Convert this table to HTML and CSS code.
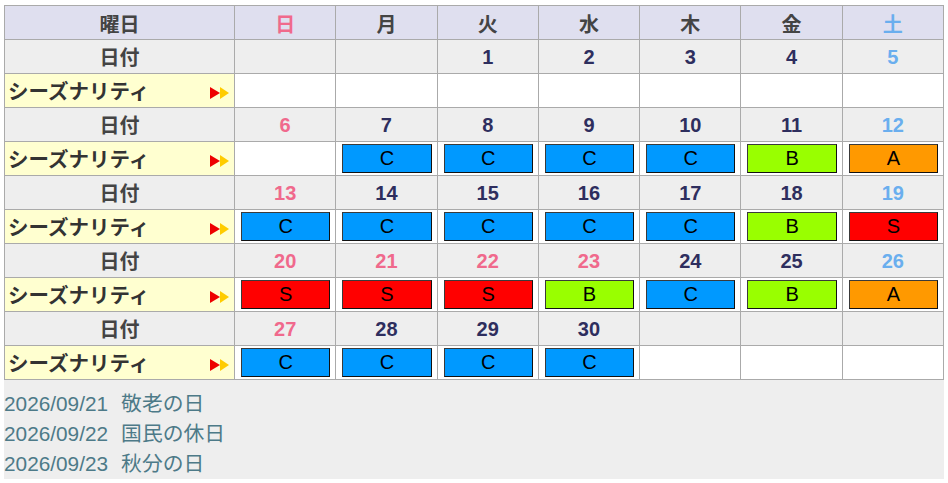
FILE: index.html
```html
<!DOCTYPE html>
<html lang="ja">
<head>
<meta charset="utf-8">
<link rel="stylesheet" href="styles.css">
</head>
<body>
<div class="wrap">
<table class="cal">
<colgroup><col class="c-label"><col><col><col><col><col><col><col></colgroup>
<tr class="head">
<th>曜日</th><th class="sun">日</th><th>月</th><th>火</th><th>水</th><th>木</th><th>金</th><th class="sat">土</th>
</tr>
<tr class="date">
<th>日付</th><td></td><td></td><td>1</td><td>2</td><td>3</td><td>4</td><td class="sat">5</td>
</tr>
<tr class="season">
<th><span class="lbl">シーズナリティ</span><span class="arr"><i class="r"></i><i class="y"></i></span></th><td></td><td></td><td></td><td></td><td></td><td></td><td></td>
</tr>
<tr class="date">
<th>日付</th><td class="sun">6</td><td>7</td><td>8</td><td>9</td><td>10</td><td>11</td><td class="sat">12</td>
</tr>
<tr class="season">
<th><span class="lbl">シーズナリティ</span><span class="arr"><i class="r"></i><i class="y"></i></span></th><td></td><td><div class="b c">C</div></td><td><div class="b c">C</div></td><td><div class="b c">C</div></td><td><div class="b c">C</div></td><td><div class="b bb">B</div></td><td><div class="b a">A</div></td>
</tr>
<tr class="date">
<th>日付</th><td class="sun">13</td><td>14</td><td>15</td><td>16</td><td>17</td><td>18</td><td class="sat">19</td>
</tr>
<tr class="season">
<th><span class="lbl">シーズナリティ</span><span class="arr"><i class="r"></i><i class="y"></i></span></th><td><div class="b c">C</div></td><td><div class="b c">C</div></td><td><div class="b c">C</div></td><td><div class="b c">C</div></td><td><div class="b c">C</div></td><td><div class="b bb">B</div></td><td><div class="b s">S</div></td>
</tr>
<tr class="date">
<th>日付</th><td class="sun">20</td><td class="sun">21</td><td class="sun">22</td><td class="sun">23</td><td>24</td><td>25</td><td class="sat">26</td>
</tr>
<tr class="season">
<th><span class="lbl">シーズナリティ</span><span class="arr"><i class="r"></i><i class="y"></i></span></th><td><div class="b s">S</div></td><td><div class="b s">S</div></td><td><div class="b s">S</div></td><td><div class="b bb">B</div></td><td><div class="b c">C</div></td><td><div class="b bb">B</div></td><td><div class="b a">A</div></td>
</tr>
<tr class="date">
<th>日付</th><td class="sun">27</td><td>28</td><td>29</td><td>30</td><td></td><td></td><td></td>
</tr>
<tr class="season">
<th><span class="lbl">シーズナリティ</span><span class="arr"><i class="r"></i><i class="y"></i></span></th><td><div class="b c">C</div></td><td><div class="b c">C</div></td><td><div class="b c">C</div></td><td><div class="b c">C</div></td><td></td><td></td><td></td>
</tr>
</table>
<ul class="holidays">
<li><span class="d">2026/09/21</span><span class="n">敬老の日</span></li>
<li><span class="d">2026/09/22</span><span class="n">国民の休日</span></li>
<li><span class="d">2026/09/23</span><span class="n">秋分の日</span></li>
</ul>
</div>
</body>
</html>
```
FILE: styles.css
```css
html, body {
  margin: 0;
  padding: 0;
  background: #ffffff;
}
body {
  font-family: "Liberation Sans", Arial, "Noto Sans CJK JP", sans-serif;
  font-size: 20px;
}
.wrap {
  margin: 5px 0 0 4px;
  width: 940px;
  height: 474px;
  background: #eeeeee;
  overflow: hidden;
}
.cal {
  width: 940px;
  border-collapse: collapse;
  table-layout: fixed;
}
.c-label { width: 230px; }
.cal tr { height: 34px; }
.cal th, .cal td {
  border: 1px solid #aaaaaa;
  padding: 0;
  text-align: center;
  vertical-align: middle;
  line-height: 20px;
}
.head th {
  background: #dfdfef;
  color: #444444;
  font-weight: bold;
  padding-top: 5px;
}
.date th {
  background: #eeeeee;
  color: #444444;
  font-weight: bold;
  padding-top: 3px;
}
.date td {
  background: #eeeeee;
  color: #2e2e5e;
  font-weight: bold;
  padding-top: 1px;
}
.head .sun, .date .sun { color: #f0698c; }
.head .sat, .date .sat { color: #6aaeee; }
.season th {
  background: #ffffd0;
  color: #333333;
  text-align: left;
  padding: 4px 5px 0 3px;
}
.season th .lbl {
  font-weight: bold;
  float: left;
  font-size: 20.5px;
}
.season th .arr {
  float: right;
  display: flex;
  align-items: center;
  height: 20px;
  margin-top: 1px;
}
.arr i {
  display: block;
  width: 0;
  height: 0;
  border-top: 6px solid transparent;
  border-bottom: 6px solid transparent;
}
.arr .r { border-left: 10px solid #ee0000; }
.arr .y { border-left: 9px solid #ffcc00; }
.season td {
  background: #ffffff;
}
.b {
  margin: 0 5px 0 6px;
  height: 27px;
  line-height: 27px;
  border: 1px solid;
  border-color: #3a3a3a #111111 #111111 #3a3a3a;
  color: #000000;
  font-size: 20px;
}
.b.c { background: #0099ff; }
.b.bb { background: #99ff00; }
.b.a { background: #ff9900; }
.b.s { background: #ff0000; }
.holidays {
  list-style: none;
  margin: 0;
  padding: 9px 0 0 0;
  color: #4d7a88;
  font-size: 20.8px;
  line-height: 30px;
}
.holidays .n { margin-left: 13px; }
```
